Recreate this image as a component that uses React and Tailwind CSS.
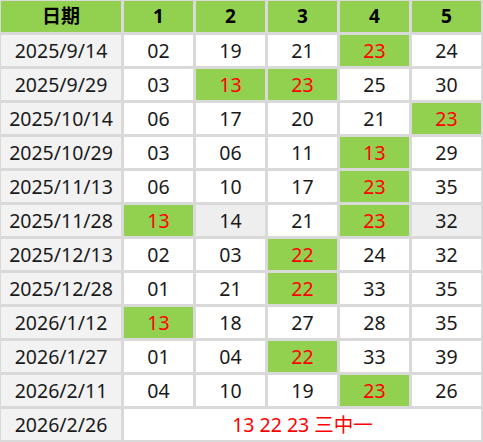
import React from "react";

const rows = [
  { date: "2025/9/14", nums: ["02", "19", "21", "23", "24"], hits: [3] },
  { date: "2025/9/29", nums: ["03", "13", "23", "25", "30"], hits: [1, 2] },
  { date: "2025/10/14", nums: ["06", "17", "20", "21", "23"], hits: [4] },
  { date: "2025/10/29", nums: ["03", "06", "11", "13", "29"], hits: [3] },
  { date: "2025/11/13", nums: ["06", "10", "17", "23", "35"], hits: [3] },
  { date: "2025/11/28", nums: ["13", "14", "21", "23", "32"], hits: [0, 3], shaded: [1, 4] },
  { date: "2025/12/13", nums: ["02", "03", "22", "24", "32"], hits: [2] },
  { date: "2025/12/28", nums: ["01", "21", "22", "33", "35"], hits: [2] },
  { date: "2026/1/12", nums: ["13", "18", "27", "28", "35"], hits: [0] },
  { date: "2026/1/27", nums: ["01", "04", "22", "33", "39"], hits: [2] },
  { date: "2026/2/11", nums: ["04", "10", "19", "23", "26"], hits: [3] },
];

function App() {
  return (
    <div
      className="w-[483px] h-[442px] bg-[#d9d9d9] pt-px pl-px pr-[2px] pb-[2px] grid grid-cols-[120px_repeat(5,69px)] grid-rows-[repeat(13,31px)] gap-[3px] text-[19.5px] leading-none text-[#1a1a1a]"
      style={{ fontFamily: '"Noto Sans", "Noto Sans CJK SC", sans-serif' }}
    >
      {["日期", "1", "2", "3", "4", "5"].map((h) => (
        <div key={h} className="bg-[#92d050] flex items-center justify-center font-bold text-black text-[19px]">
          {h}
        </div>
      ))}
      {rows.map((row) => (
        <React.Fragment key={row.date}>
          <div className="bg-[#f2f2f2] flex items-center justify-center">{row.date}</div>
          {row.nums.map((n, i) => {
            const hit = row.hits.includes(i);
            const shaded = row.shaded && row.shaded.includes(i);
            return (
              <div
                key={i}
                className={
                  "flex items-center justify-center " +
                  (hit ? "bg-[#92d050] text-[#ff0000]" : shaded ? "bg-[#eeeeee]" : "bg-white")
                }
              >
                {n}
              </div>
            );
          })}
        </React.Fragment>
      ))}
      <div className="bg-[#f2f2f2] flex items-center justify-center">2026/2/26</div>
      <div className="col-span-5 bg-white flex items-center justify-center text-[#ff0000]">
        13 22 23 三中一
      </div>
    </div>
  );
}

export default App;
